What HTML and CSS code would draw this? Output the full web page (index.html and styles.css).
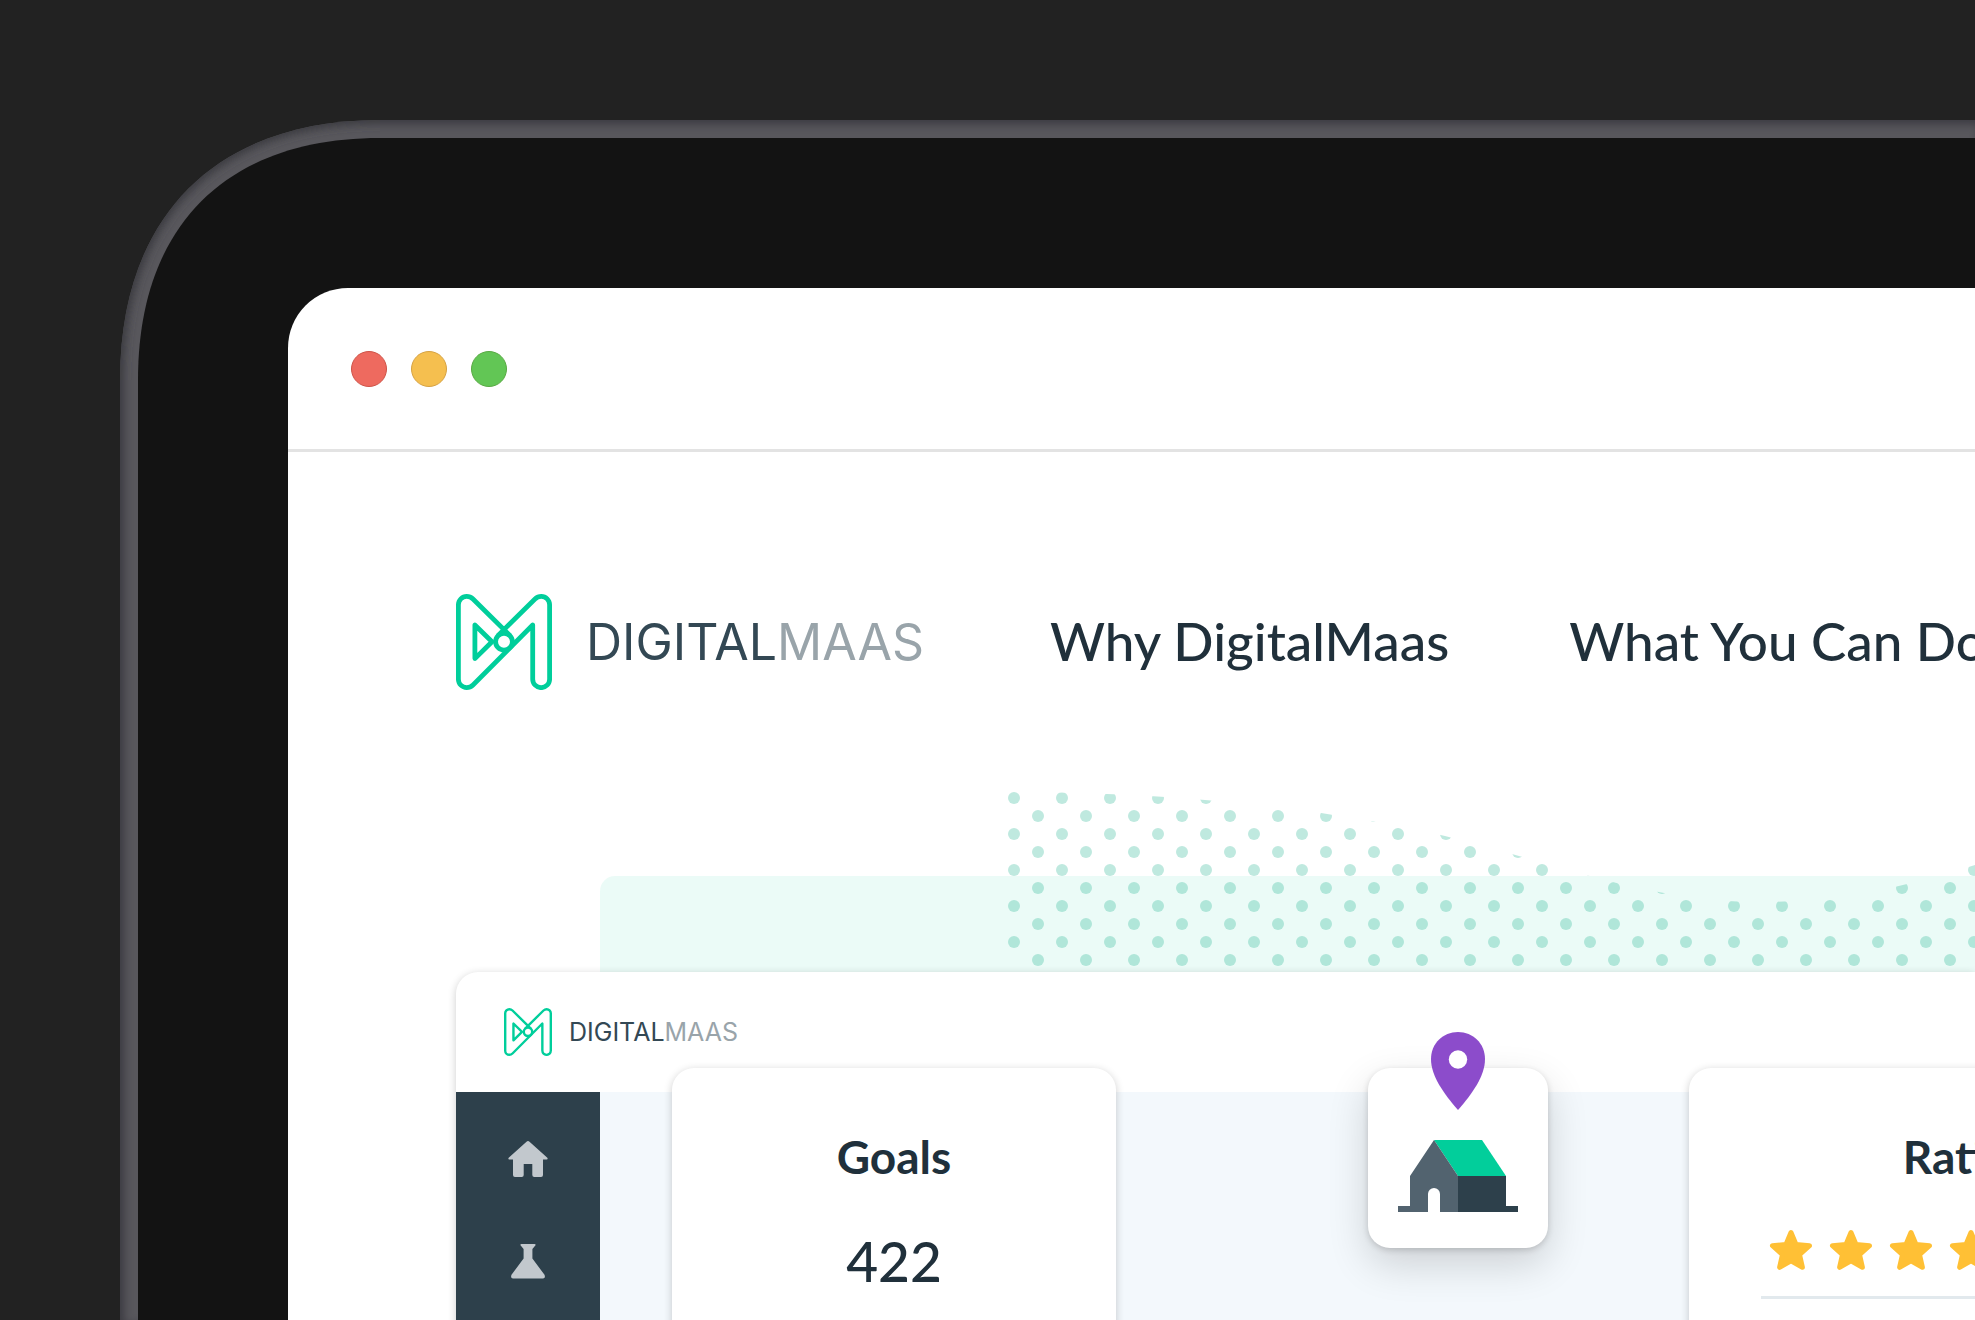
FILE: index.html
```html
<!DOCTYPE html>
<html lang="en">
<head>
<meta charset="utf-8">
<title>DigitalMaas</title>
<link rel="stylesheet" href="styles.css">
</head>
<body>
<svg class="symbols" aria-hidden="true">
  <symbol id="mark" viewBox="0 0 96 96">
    <g fill="none" stroke="#00ce9b" stroke-width="4.8" stroke-linejoin="round">
      <path d="M54.1 41.6L17 5Q14.3 2.4 10.7 2.4A8.3 8.3 0 0 0 2.4 10.7V85.3A8.3 8.3 0 0 0 10.7 93.6Q14.3 93.6 17 91L76.7 31V85.2A8.45 8.45 0 0 0 93.6 85.2V10.7A8.3 8.3 0 0 0 85.3 2.4Q81.7 2.4 79 5L41.9 41.6"/>
      <circle cx="48" cy="47.7" r="8.4"/>
      <path d="M18.9 31V64.6L36 47.8Z"/>
    </g>
  </symbol>
  <symbol id="star" viewBox="0 0 44 42">
    <path fill="#ffc035" stroke="#ffc035" stroke-width="5" stroke-linejoin="round" d="M22 3.5L27 15.5L40.5 16.7L30.5 25.6L33.4 38.3L22 31.9L10.6 38.3L13.5 25.6L3.5 16.7L17 15.5Z"/>
  </symbol>
</svg>
<div class="device">
  <div class="bezel">
    <svg class="corner" viewBox="0 0 260 260" aria-hidden="true">
      <defs>
        <clipPath id="corner-clip"><path d="M0 260C0 96 96 0 260 0V260Z"/></clipPath>
        <filter id="corner-blur" filterUnits="userSpaceOnUse" x="-60" y="-60" width="380" height="380"><feGaussianBlur stdDeviation="4"/></filter>
      </defs>
      <path fill="#222" d="M0 0H260V260H0Z"/>
      <path fill="#58575c" d="M0 260C0 96 96 0 260 0V260Z"/>
      <g clip-path="url(#corner-clip)">
        <path filter="url(#corner-blur)" fill="#3b3a41" stroke="#3b3a41" stroke-width="8" d="M0 310V260C0 96 96 0 260 0H310V-50H-50V310Z"/>
      </g>
      <path fill="#131313" d="M18 260C18 106 106 18 260 18V260Z"/>
    </svg>
    <div class="screen">
      <div class="titlebar">
        <span class="light light-close"></span>
        <span class="light light-minimize"></span>
        <span class="light light-zoom"></span>
      </div>
      <header class="site-header">
        <a class="brand" href="#">
          <svg class="brand-mark" aria-hidden="true"><use href="#mark"/></svg>
          <span class="brand-name">DIGITAL<span class="brand-soft">MAAS</span></span>
        </a>
        <nav class="site-nav">
          <a href="#">Why DigitalMaas</a>
          <a href="#">What You Can Do</a>
        </nav>
      </header>
      <main class="hero">
        <svg class="dots" aria-hidden="true">
          <defs>
            <pattern id="dot-grid" width="48" height="36" patternUnits="userSpaceOnUse">
              <circle cx="6" cy="6" r="6" fill="#bfe9df"/>
              <circle cx="30" cy="24" r="6" fill="#bfe9df"/>
            </pattern>
          </defs>
          <path fill="url(#dot-grid)" d="M0 0C90 0 180 5 260 14C310 20 372 29 437 44C540 69 640 110 750 110C820 110 890 98 967 73L1100 30V216H0Z"/>
        </svg>
        <div class="mint"></div>
        <section class="app">
          <div class="app-header">
            <a class="brand brand-small" href="#">
              <svg class="brand-mark" aria-hidden="true"><use href="#mark"/></svg>
              <span class="brand-name">DIGITAL<span class="brand-soft">MAAS</span></span>
            </a>
          </div>
          <div class="app-body">
            <nav class="sidebar">
              <a href="#" aria-label="Home">
                <svg viewBox="0 0 40 40" aria-hidden="true"><path fill="#c2c8cd" d="M20 2Q20.8 2 21.5 2.7L39.3 18.8Q40.2 20.4 38.8 20.4H35V36Q35 38 33 38H26.3Q24.3 38 24.3 36V25H15.7V36Q15.7 38 13.7 38H7Q5 38 5 36V20.4H1.2Q-.2 20.4 .7 18.8L18.5 2.7Q19.2 2 20 2Z"/></svg>
              </a>
              <a href="#" aria-label="Experiments">
                <svg viewBox="0 0 40 40" aria-hidden="true"><path fill="#c2c8cd" d="M13.5 3H26.5Q28.2 3 27.3 4.5L24.4 8V17.5L36.5 33.8Q37.8 37.6 35 37.6H5Q2.2 37.6 3.5 33.8L15.6 17.5V8L12.7 4.5Q11.8 3 13.5 3Z"/></svg>
              </a>
            </nav>
            <div class="board">
              <article class="card goals">
                <h2>Goals</h2>
                <p class="figure">422</p>
              </article>
              <article class="card place">
                <svg class="pin" viewBox="0 0 54 78" aria-hidden="true">
                  <path fill="#8c4ccb" d="M27 0C42 0 54 11.5 54 27C54 44 41 62 27 78C13 62 0 44 0 27C0 11.5 12 0 27 0Z"/>
                  <circle cx="27" cy="27.5" r="9.2" fill="#fff"/>
                </svg>
                <svg class="house" viewBox="0 0 120 72" aria-hidden="true">
                  <path fill="#02ce9b" d="M36 0H84L108 36H60Z"/>
                  <path fill="#2d404b" d="M60 36H108V66H120V72H60Z"/>
                  <path fill="#52636f" d="M36 0L60 36V72H42V54A6 6 0 0 0 30 54V72H0V66H12V36Z"/>
                </svg>
              </article>
              <article class="card ratings">
                <h2>Ratings</h2>
                <div class="stars" role="img" aria-label="5 stars">
                  <svg><use href="#star"/></svg><svg><use href="#star"/></svg><svg><use href="#star"/></svg><svg><use href="#star"/></svg><svg><use href="#star"/></svg>
                </div>
                <div class="stars" role="img" aria-label="5 stars">
                  <svg><use href="#star"/></svg><svg><use href="#star"/></svg><svg><use href="#star"/></svg><svg><use href="#star"/></svg><svg><use href="#star"/></svg>
                </div>
              </article>
            </div>
          </div>
        </section>
      </main>
    </div>
  </div>
</div>
</body>
</html>
```
FILE: styles.css
```css
* { box-sizing: border-box; }

body {
  margin: 0;
  height: 100vh;
  padding: 120px 0 0 120px;
  overflow: hidden;
  background: #222;
  color: #20303b;
  font-family: Lato, "Noto Sans", sans-serif;
  display: flex;
  flex-direction: column;
}

a { color: inherit; text-decoration: none; }
h2, p { margin: 0; }
svg { display: block; flex: none; }
.symbols { display: none; }

.device {
  flex: 1;
  min-height: 0;
  display: flex;
  padding: 18px 0 0 18px;
  background: #58575c;
  box-shadow: inset 4px 4px 8px #3b3a41;
}

.bezel {
  position: relative;
  flex: 1;
  min-width: 0;
  display: flex;
  padding: 150px 0 0 150px;
  background: #131313;
}

.corner {
  position: absolute;
  top: -18px;
  left: -18px;
  width: 260px;
  height: 260px;
}

.screen {
  position: relative;
  flex: 1;
  min-width: 0;
  overflow: hidden;
  display: flex;
  flex-direction: column;
  border-top-left-radius: 60px;
  background: #fff;
}

.titlebar {
  display: flex;
  gap: 24px;
  padding: 63px 63px 62px;
  border-bottom: 3px solid #e3e3e3;
}

.light {
  width: 36px;
  height: 36px;
  border: 1px solid;
  border-radius: 50%;
}
.light-close { background: #ee6a5f; border-color: #ce5347; }
.light-minimize { background: #f5bf4f; border-color: #d6a243; }
.light-zoom { background: #62c655; border-color: #58a942; }

.site-header {
  display: flex;
  align-items: center;
  gap: 120px;
  padding: 142px 0 0 168px;
}

.brand {
  flex: none;
  display: flex;
  align-items: center;
  gap: 34px;
  width: 474px;
  color: #334854;
  font-family: Inter, sans-serif;
  font-size: 50px;
  line-height: 96px;
  white-space: nowrap;
}
.brand-mark { width: 96px; height: 96px; }
.brand-soft { color: #99a4aa; }

.site-nav {
  display: flex;
  gap: 120px;
  padding-bottom: 2px;
  font-size: 53px;
  font-weight: 500;
  line-height: 94px;
  white-space: nowrap;
}

.hero {
  position: relative;
  flex: 1;
  display: flex;
  padding: 282px 0 0 168px;
}

.dots {
  position: absolute;
  top: 102px;
  left: 720px;
  width: 1100px;
  height: 180px;
}

.mint {
  position: absolute;
  inset: 186px 0 0 312px;
  border-top-left-radius: 15px;
  background: rgba(0, 206, 155, .08);
}

.app {
  position: relative;
  flex: 1;
  min-width: 0;
  display: flex;
  flex-direction: column;
  border-top-left-radius: 22px;
  background: #fff;
  box-shadow: 0 2px 8px rgba(0, 0, 0, .2);
}

.app-header { padding: 36px 48px; }

.brand-small {
  gap: 17px;
  width: auto;
  font-size: 25px;
  line-height: 48px;
}
.brand-small .brand-mark { width: 48px; height: 48px; }

.app-body { flex: 1; display: flex; }

.sidebar {
  display: flex;
  flex-direction: column;
  align-items: center;
  gap: 62px;
  width: 144px;
  padding-top: 47px;
  background: #2d404b;
}
.sidebar svg { width: 40px; height: 40px; }

.board {
  flex: 1;
  min-width: 0;
  display: flex;
  align-items: flex-start;
  padding-left: 72px;
  background: #f3f8fc;
}

.card {
  flex: none;
  margin-top: -24px;
  border-radius: 22px;
  background: #fff;
  box-shadow: 0 2px 8px rgba(0, 0, 0, .2);
}
.card h2 {
  font-size: 46px;
  font-weight: 700;
  line-height: 58px;
  text-align: center;
}

.goals {
  width: 444px;
  min-height: 480px;
  padding-top: 60px;
}
.figure {
  padding-top: 36px;
  font-size: 55px;
  font-weight: 500;
  line-height: 78px;
  text-align: center;
}

.place {
  position: relative;
  width: 180px;
  height: 180px;
  margin-left: 252px;
  padding: 72px 30px 36px;
  box-shadow: 0 2px 6px rgba(0, 0, 0, .16), 0 16px 40px rgba(0, 0, 0, .16);
}
.pin {
  position: absolute;
  top: -36px;
  left: 63px;
  width: 54px;
  height: 78px;
}
.house { width: 120px; height: 72px; }

.ratings {
  width: 580px;
  min-height: 480px;
  margin-left: 141px;
  padding: 60px 72px 0;
}
.stars {
  display: flex;
  gap: 16px;
  height: 91px;
  padding: 21px 8px 0;
  border-bottom: 3px solid #e2e9ed;
}
.stars svg { width: 44px; height: 42px; }
.ratings h2 { padding-bottom: 22px; }
```
